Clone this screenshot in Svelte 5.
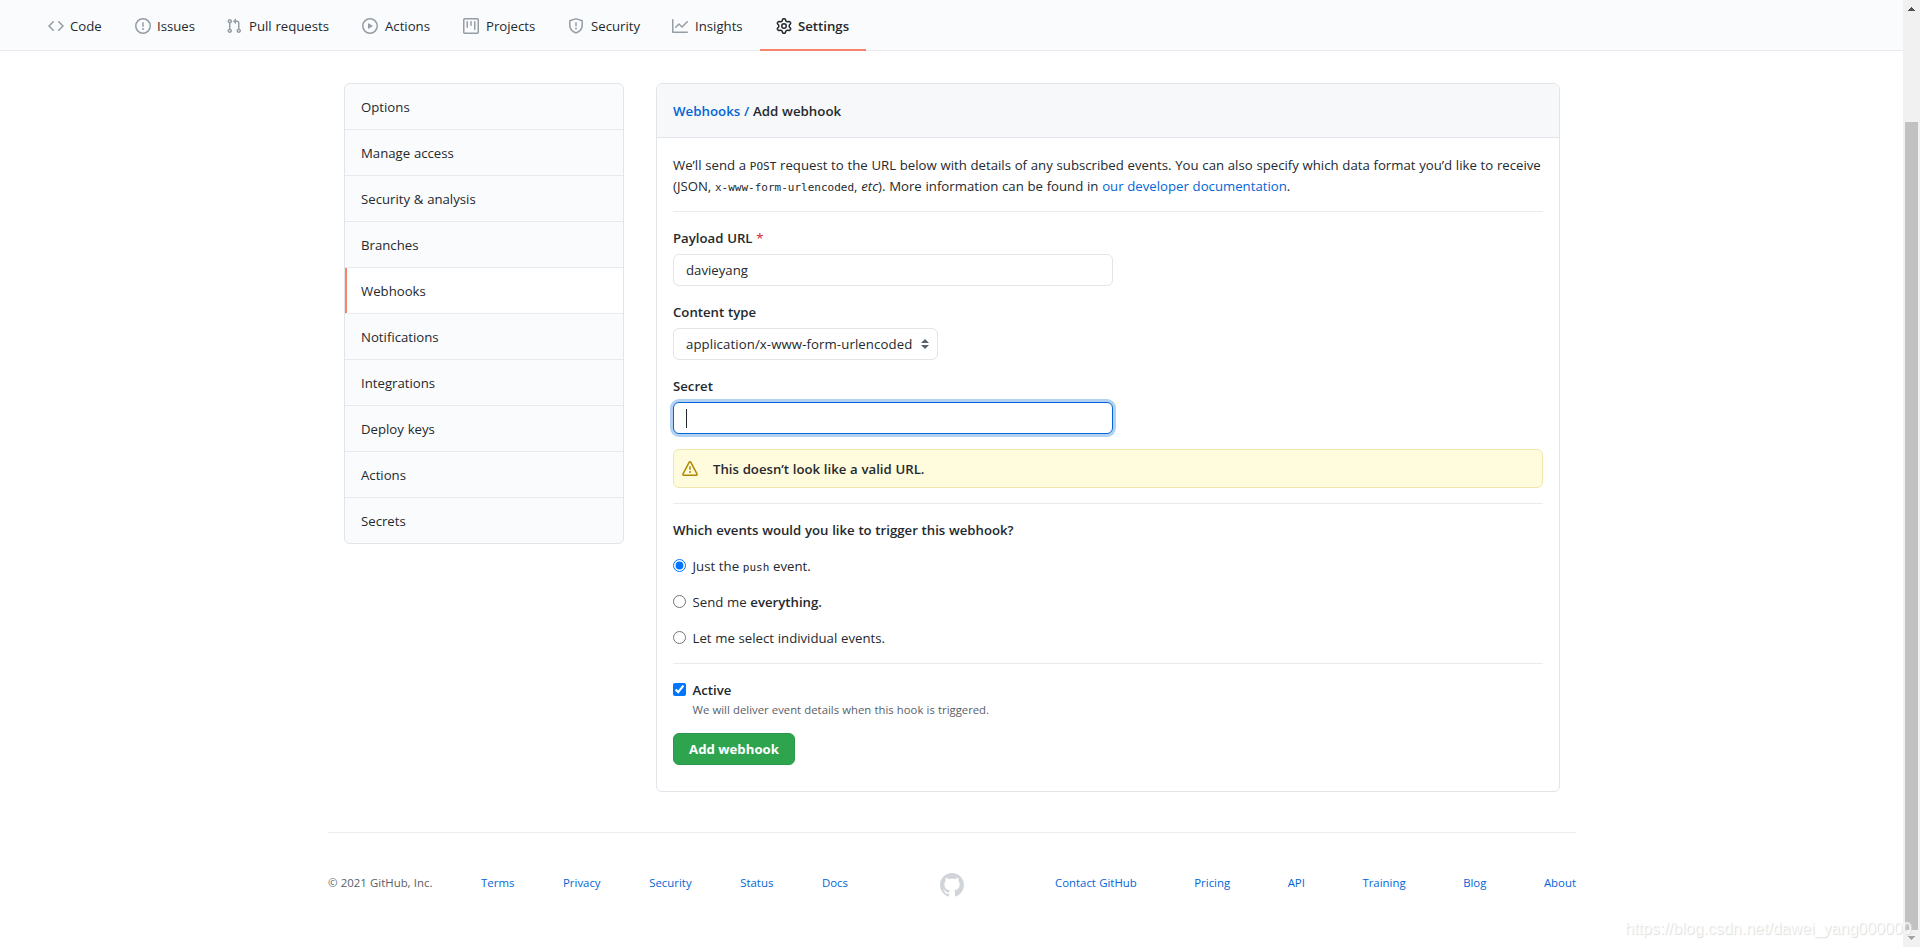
<script>
  let payloadUrl = "davieyang";
  let secret = "";
  let active = true;
  let trigger = "push";

  const tabs = [
    {
      label: "Code",
      icon: "M4.72 3.22a.75.75 0 011.06 1.06L2.06 8l3.72 3.72a.75.75 0 11-1.06 1.06L.47 8.53a.75.75 0 010-1.06l4.25-4.25zm6.56 0a.75.75 0 10-1.06 1.06L13.94 8l-3.72 3.72a.75.75 0 101.06 1.06l4.25-4.25a.75.75 0 000-1.06l-4.25-4.25z",
    },
    {
      label: "Issues",
      icon: "M8 1.5a6.5 6.5 0 100 13 6.5 6.5 0 000-13zM0 8a8 8 0 1116 0A8 8 0 010 8zm9 3a1 1 0 11-2 0 1 1 0 012 0zm-.25-6.25a.75.75 0 00-1.5 0v3.5a.75.75 0 001.5 0v-3.5z",
    },
    {
      label: "Pull requests",
      icon: "M7.177 3.073L9.573.677A.25.25 0 0110 .854v4.792a.25.25 0 01-.427.177L7.177 3.427a.25.25 0 010-.354zM3.75 2.5a.75.75 0 100 1.5.75.75 0 000-1.5zm-2.25.75a2.25 2.25 0 113 2.122v5.256a2.251 2.251 0 11-1.5 0V5.372A2.25 2.25 0 011.5 3.25zM11 2.5h-1V4h1a1 1 0 011 1v5.628a2.251 2.251 0 101.5 0V5A2.5 2.5 0 0011 2.5zm1 10.25a.75.75 0 111.5 0 .75.75 0 01-1.5 0zM3.75 12a.75.75 0 100 1.5.75.75 0 000-1.5z",
    },
    {
      label: "Actions",
      icon: "M1.5 8a6.5 6.5 0 1113 0 6.5 6.5 0 01-13 0zM8 0a8 8 0 100 16A8 8 0 008 0zM6.379 5.227A.25.25 0 006 5.442v5.117a.25.25 0 00.379.214l4.264-2.559a.25.25 0 000-.428L6.379 5.227z",
    },
    {
      label: "Projects",
      icon: "M1.75 0A1.75 1.75 0 000 1.75v12.5C0 15.216.784 16 1.75 16h12.5A1.75 1.75 0 0016 14.25V1.75A1.75 1.75 0 0014.25 0H1.75zM1.5 1.75a.25.25 0 01.25-.25h12.5a.25.25 0 01.25.25v12.5a.25.25 0 01-.25.25H1.75a.25.25 0 01-.25-.25V1.75zM11.75 3a.75.75 0 00-.75.75v7.5a.75.75 0 001.5 0v-7.5a.75.75 0 00-.75-.75zm-8.25.75a.75.75 0 011.5 0v5.5a.75.75 0 01-1.5 0v-5.5zM8 3a.75.75 0 00-.75.75v3.5a.75.75 0 001.5 0v-3.5A.75.75 0 008 3z",
    },
    {
      label: "Security",
      icon: "M7.467.133a1.75 1.75 0 011.066 0l5.25 1.68A1.75 1.75 0 0115 3.48V7c0 1.566-.32 3.182-1.303 4.682-.983 1.498-2.585 2.813-5.032 3.855a1.7 1.7 0 01-1.33 0c-2.447-1.042-4.049-2.357-5.032-3.855C1.32 10.182 1 8.566 1 7V3.48a1.75 1.75 0 011.217-1.667l5.25-1.68zm.61 1.429a.25.25 0 00-.153 0l-5.25 1.68a.25.25 0 00-.174.238V7c0 1.358.275 2.666 1.057 3.86.784 1.194 2.121 2.34 4.366 3.297a.2.2 0 00.154 0c2.245-.956 3.582-2.104 4.366-3.298C13.225 9.666 13.5 8.36 13.5 7V3.48a.25.25 0 00-.174-.237l-5.25-1.68zM9 10.5a1 1 0 11-2 0 1 1 0 012 0zm-.25-5.75a.75.75 0 10-1.5 0v3a.75.75 0 001.5 0v-3z",
    },
    {
      label: "Insights",
      icon: "M1.5 1.75a.75.75 0 00-1.5 0v12.5c0 .414.336.75.75.75h14.5a.75.75 0 000-1.5H1.5V1.75zm14.28 2.53a.75.75 0 00-1.06-1.06L10 7.94 7.53 5.47a.75.75 0 00-1.06 0L3.22 8.72a.75.75 0 001.06 1.06L7 7.06l2.47 2.47a.75.75 0 001.06 0l5.25-5.25z",
    },
    {
      label: "Settings",
      selected: true,
      icon: "M7.429 1.525a6.593 6.593 0 011.142 0c.036.003.108.036.137.146l.289 1.105c.147.56.55.967.997 1.189.174.086.341.183.501.29.417.278.97.423 1.53.27l1.102-.303c.11-.03.175.016.195.046.219.31.41.641.573.989.014.031.022.11-.059.19l-.815.806c-.411.406-.562.957-.53 1.456a4.588 4.588 0 010 .582c-.032.499.119 1.05.53 1.456l.815.806c.08.08.073.159.059.19a6.494 6.494 0 01-.573.99c-.02.029-.086.074-.195.045l-1.103-.303c-.559-.153-1.112-.008-1.529.27-.16.107-.327.204-.5.29-.449.222-.851.628-.998 1.189l-.289 1.105c-.029.11-.101.143-.137.146a6.613 6.613 0 01-1.142 0c-.036-.003-.108-.037-.137-.146l-.289-1.105c-.147-.56-.55-.967-.997-1.189a4.502 4.502 0 01-.501-.29c-.417-.278-.97-.423-1.53-.27l-1.102.303c-.11.03-.175-.016-.195-.046a6.492 6.492 0 01-.573-.989c-.014-.031-.022-.11.059-.19l.815-.806c.411-.406.562-.957.53-1.456a4.587 4.587 0 010-.582c.032-.499-.119-1.05-.53-1.456l-.815-.806c-.08-.08-.073-.159-.059-.19a6.44 6.44 0 01.573-.99c.02-.029.086-.075.195-.045l1.103.303c.559.153 1.112.008 1.529-.27.16-.107.327-.204.5-.29.449-.222.851-.628.998-1.189l.289-1.105c.029-.11.101-.143.137-.146zM8 0c-.236 0-.47.01-.701.03-.743.065-1.29.615-1.458 1.261l-.29 1.106c-.017.066-.078.158-.211.224a5.994 5.994 0 00-.668.386c-.123.082-.233.09-.3.071L3.27 2.776c-.644-.177-1.392.02-1.82.63a7.977 7.977 0 00-.704 1.217c-.315.675-.111 1.422.363 1.891l.815.806c.05.048.098.147.088.294a6.084 6.084 0 000 .772c.01.147-.038.246-.088.294l-.815.806c-.474.469-.678 1.216-.363 1.891.2.428.436.835.704 1.218.428.609 1.176.806 1.82.63l1.103-.303c.066-.019.176-.011.299.071.213.143.436.272.668.386.133.066.194.158.212.224l.289 1.106c.169.646.715 1.196 1.458 1.26a8.094 8.094 0 001.402 0c.743-.064 1.29-.614 1.458-1.26l.29-1.106c.017-.066.078-.158.211-.224a5.98 5.98 0 00.668-.386c.123-.082.233-.09.3-.071l1.102.302c.644.177 1.392-.02 1.82-.63.268-.382.505-.789.704-1.217.315-.675.111-1.422-.364-1.891l-.814-.806c-.05-.048-.098-.147-.088-.294a6.1 6.1 0 000-.772c-.01-.147.039-.246.088-.294l.814-.806c.475-.469.679-1.216.364-1.891a7.992 7.992 0 00-.704-1.218c-.428-.609-1.176-.806-1.82-.63l-1.103.303c-.066.019-.176.011-.299-.071a5.991 5.991 0 00-.668-.386c-.133-.066-.194-.158-.212-.224L10.16 1.29C9.99.645 9.444.095 8.701.031A8.094 8.094 0 008 0zm1.5 8a1.5 1.5 0 11-3 0 1.5 1.5 0 013 0zM11 8a3 3 0 11-6 0 3 3 0 016 0z",
    },
  ];

  const menu = [
    "Options",
    "Manage access",
    "Security & analysis",
    "Branches",
    "Webhooks",
    "Notifications",
    "Integrations",
    "Deploy keys",
    "Actions",
    "Secrets",
  ];
  const current = "Webhooks";

  const footerLeft = ["Terms", "Privacy", "Security", "Status", "Docs"];
  const footerRight = ["Contact GitHub", "Pricing", "API", "Training", "Blog", "About"];
</script>

<div class="window">
  <div class="page">
    <nav class="tabs">
      {#each tabs as tab}
        <a class="tab" class:selected={tab.selected} href="#top">
          <svg viewBox="0 0 16 16" width="16" height="16">
            <path fill-rule="evenodd" d={tab.icon} />
          </svg>
          <span>{tab.label}</span>
        </a>
      {/each}
    </nav>

    <main class="content">
      <nav class="menu">
        {#each menu as item}
          <a class="menu-item" class:current={item === current} href="#top">{item}</a>
        {/each}
      </nav>

      <section class="panel">
        <h2 class="panel-header"><a href="#top">Webhooks /</a> Add webhook</h2>

        <form class="panel-body">
          <p class="intro">
            <span class="line">We’ll send a <code>POST</code> request to the URL below with details of any subscribed events. You can also specify which data format you’d like to receive</span>
            <span class="line">(JSON, <code>x-www-form-urlencoded</code>, <em>etc</em>). More information can be found in <a href="#top">our developer documentation</a>.</span>
          </p>

          <hr />

          <div class="field">
            <label for="url">Payload URL <span class="required">*</span></label>
            <input id="url" class="text" type="text" bind:value={payloadUrl} />
          </div>

          <div class="field">
            <label for="type">Content type</label>
            <div id="type" class="select">
              <span>application/x-www-form-urlencoded</span>
              <svg viewBox="0 0 8 10" width="8" height="10">
                <path d="M4 0l4 4H0zM4 10L0 6h8z" />
              </svg>
            </div>
          </div>

          <div class="field">
            <label for="secret">Secret</label>
            <div class="secret">
              <input id="secret" class="text focused" type="text" bind:value={secret} />
              <span class="caret"></span>
            </div>
          </div>

          <div class="warning">
            <svg viewBox="0 0 16 16" width="16" height="16">
              <path
                fill-rule="evenodd"
                d="M8.22 1.754a.25.25 0 00-.44 0L1.698 13.132a.25.25 0 00.22.368h12.164a.25.25 0 00.22-.368L8.22 1.754zm-1.763-.707c.659-1.234 2.427-1.234 3.086 0l6.082 11.378A1.75 1.75 0 0114.082 15H1.918a1.75 1.75 0 01-1.543-2.575L6.457 1.047zM9 11a1 1 0 11-2 0 1 1 0 012 0zm-.25-5.25a.75.75 0 00-1.5 0v2.5a.75.75 0 001.5 0v-2.5z"
              />
            </svg>
            <strong>This doesn’t look like a valid URL.</strong>
          </div>

          <hr />

          <strong class="question">Which events would you like to trigger this webhook?</strong>
          <label class="choice">
            <input type="radio" bind:group={trigger} value="push" />
            <span>Just the <code>push</code> event.</span>
          </label>
          <label class="choice">
            <input type="radio" bind:group={trigger} value="all" />
            <span>Send me <strong>everything.</strong></span>
          </label>
          <label class="choice">
            <input type="radio" bind:group={trigger} value="choose" />
            <span>Let me select individual events.</span>
          </label>

          <hr />

          <div class="active">
            <label class="choice">
              <input type="checkbox" bind:checked={active} />
              <strong>Active</strong>
            </label>
            <p class="note">We will deliver event details when this hook is triggered.</p>
          </div>

          <button class="submit" type="button">Add webhook</button>
        </form>
      </section>
    </main>

    <footer class="footer">
      <div class="links left">
        <span>© 2021 GitHub, Inc.</span>
        {#each footerLeft as link}
          <a href="#top">{link}</a>
        {/each}
      </div>
      <svg class="mark" viewBox="0 0 16 16" width="24" height="24">
        <path
          fill-rule="evenodd"
          d="M8 0C3.58 0 0 3.58 0 8c0 3.54 2.29 6.53 5.47 7.59.4.07.55-.17.55-.38 0-.19-.01-.82-.01-1.49-2.01.37-2.53-.49-2.69-.94-.09-.23-.48-.94-.82-1.13-.28-.15-.68-.52-.01-.53.63-.01 1.08.58 1.23.82.72 1.21 1.87.87 2.33.66.07-.52.28-.87.51-1.07-1.78-.2-3.64-.89-3.64-3.95 0-.87.31-1.59.82-2.15-.08-.2-.36-1.02.08-2.12 0 0 .67-.21 2.2.82.64-.18 1.32-.27 2-.27.68 0 1.36.09 2 .27 1.53-1.04 2.2-.82 2.2-.82.44 1.1.16 1.92.08 2.12.51.56.82 1.27.82 2.15 0 3.07-1.87 3.75-3.65 3.95.29.25.54.73.54 1.48 0 1.07-.01 1.93-.01 2.2 0 .21.15.46.55.38A8.013 8.013 0 0016 8c0-4.42-3.58-8-8-8z"
        />
      </svg>
      <div class="links right">
        {#each footerRight as link}
          <a href="#top">{link}</a>
        {/each}
      </div>
    </footer>
  </div>

  <div class="scrollbar">
    <svg viewBox="0 0 7 4" width="7" height="4"><path fill="#505050" d="M3 0h1v1h1v1h1v1h1v1H0V3h1V2h1V1h1z" /></svg>
    <div class="thumb"></div>
    <svg viewBox="0 0 7 4" width="7" height="4"><path fill="#a3a3a3" d="M0 0h7v1H6v1H5v1H4v1H3V3H2V2H1V1H0z" /></svg>
  </div>

  <div class="watermark">https://blog.csdn.net/dawei_yang000000</div>
</div>

<style>
  :global(body) {
    margin: 0;
    background: #fff;
  }
  .window {
    position: relative;
    display: flex;
    width: 1920px;
    height: 947px;
    overflow: hidden;
    color: #24292e;
    font-family: "Open Sans", "Noto Sans", sans-serif;
    font-size: 13.2px;
    line-height: 21px;
    word-spacing: 0.3px;
  }
  .window * {
    box-sizing: border-box;
  }
  .page {
    flex: 1;
    display: flex;
    flex-direction: column;
  }
  a {
    color: #0366d6;
    text-decoration: none;
  }
  svg {
    display: block;
    flex: none;
    fill: currentColor;
  }
  strong {
    font-weight: 600;
  }
  code {
    font-family: "DejaVu Sans Mono", monospace;
    font-size: 11px;
    line-height: 1;
  }

  .tabs {
    display: grid;
    grid-template-columns: 87px 91px 136px 101px 105px 104px 104px 106px;
    height: 51px;
    padding-left: 32px;
    background: #fafbfc;
    border-bottom: 1px solid #e8eaed;
  }
  .tab {
    display: flex;
    align-items: center;
    gap: 6px;
    height: 51px;
    padding: 3px 0 0 16px;
    border-bottom: 2px solid transparent;
    color: #24292e;
    white-space: nowrap;
  }
  .tab svg {
    color: #959da5;
  }
  .tab:nth-child(n + 3) {
    gap: 7px;
  }
  .tab.selected {
    gap: 6px;
    border-bottom-color: #f9826c;
    font-weight: 600;
  }
  .tab.selected svg {
    color: #24292e;
  }

  .content {
    display: flex;
    align-items: flex-start;
    gap: 32px;
    width: 1216px;
    margin: 32px auto 0 344px;
  }
  .menu {
    flex: none;
    width: 280px;
    overflow: hidden;
    border: 1px solid #e1e4e8;
    border-radius: 6px;
    background: #fafbfc;
  }
  .menu-item {
    display: flex;
    align-items: center;
    height: 46px;
    padding: 2px 0 0 16px;
    border-bottom: 1px solid #e8eaed;
    color: #24292e;
  }
  .menu-item:last-child {
    height: 45px;
    border-bottom: 0;
  }
  .menu-item.current {
    background: linear-gradient(#f9826c, #f9826c) left / 2px 100% no-repeat #fff;
  }

  .panel {
    flex: 1;
    height: 709px;
    border: 1px solid #e1e4e8;
    border-radius: 6px;
    overflow: hidden;
  }
  .panel-header {
    height: 54px;
    margin: 0;
    padding: 17px 16px 15px;
    background: #f6f8fa;
    border-bottom: 1px solid #e1e4e8;
    font-size: 13.3px;
    font-weight: 600;
    line-height: 21px;
  }
  .panel-body {
    display: flex;
    flex-direction: column;
    gap: 15px;
    padding: 16px;
  }
  .intro {
    margin: 0;
  }
  .line {
    display: block;
    height: 21px;
    line-height: 23px;
    white-space: nowrap;
  }
  hr {
    width: 100%;
    height: 1px;
    margin: 0;
    border: 0;
    background: #e8eaed;
  }

  .field {
    display: flex;
    flex-direction: column;
    align-items: flex-start;
    gap: 6px;
    font-weight: 600;
  }
  .field label {
    height: 21px;
    line-height: 23px;
  }
  .required {
    color: #cb2431;
    font-weight: 400;
  }
  .text,
  .select {
    height: 32px;
    padding: 0 12px;
    border: 1px solid #e1e4e8;
    border-radius: 6px;
    background: #fff;
    color: #24292e;
    font-family: inherit;
    font-size: 13.2px;
    font-weight: 400;
  }
  .text {
    display: block;
    width: 440px;
    outline: none;
  }
  .select {
    display: flex;
    align-items: center;
    justify-content: space-between;
    width: 265px;
    padding-right: 8px;
    letter-spacing: 0.1px;
    white-space: nowrap;
  }
  .select svg {
    color: #586069;
  }
  .focused {
    border-color: #0366d6;
    box-shadow: 0 0 0 3px rgba(3, 102, 214, 0.3);
  }
  .secret {
    position: relative;
  }
  .caret {
    position: absolute;
    top: 7px;
    left: 13px;
    width: 1px;
    height: 19px;
    background: #24292e;
  }

  .warning {
    display: flex;
    align-items: center;
    gap: 15px;
    height: 39px;
    padding: 1px 8px 0;
    border: 1px solid #efe6ae;
    border-radius: 6px;
    background: #fffbdd;
  }
  .warning svg {
    color: #b08800;
  }

  .question,
  .choice {
    height: 21px;
    line-height: 23px;
  }
  .choice {
    display: flex;
    gap: 6.5px;
  }
  .choice input {
    flex: none;
    width: 13px;
    height: 13px;
    margin: 4px 0 0;
    accent-color: #0075ff;
  }
  .note {
    height: 18px;
    margin: 0;
    padding-left: 19.5px;
    color: #586069;
    font-size: 11.3px;
    line-height: 20px;
  }
  .submit {
    align-self: flex-start;
    width: 122px;
    height: 32px;
    padding: 0;
    border: 1px solid #2c974b;
    border-radius: 6px;
    background: #2ea44f;
    color: #fff;
    font-family: inherit;
    font-size: 13.2px;
    font-weight: 700;
  }

  .footer {
    display: flex;
    justify-content: space-between;
    width: 1248px;
    margin: 40px 0 0 328px;
    padding-top: 40px;
    border-top: 1px solid #eaecef;
    font-size: 11.4px;
    line-height: 20px;
  }
  .links {
    display: flex;
    justify-content: space-between;
    color: #586069;
    white-space: nowrap;
  }
  .left {
    width: 520px;
  }
  .right {
    width: 521px;
  }
  .mark {
    color: #d1d5da;
  }

  .scrollbar {
    display: flex;
    flex-direction: column;
    align-items: center;
    justify-content: space-between;
    width: 17px;
    padding: 7px 0;
    background: #f1f1f1;
  }
  .thumb {
    width: 13px;
    height: 808px;
    margin-top: 105px;
    background: #c1c1c1;
  }
  .watermark {
    position: absolute;
    top: 919px;
    left: 1625px;
    color: rgba(255, 255, 255, 0.8);
    font-family: "Liberation Sans", sans-serif;
    font-size: 16px;
    line-height: 20px;
    text-shadow: 1px 1px 1px #dcdcdc;
    white-space: nowrap;
    word-spacing: 0;
  }
</style>
